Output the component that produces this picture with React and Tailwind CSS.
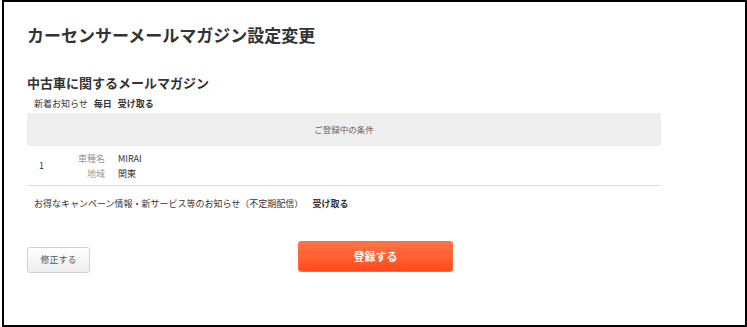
import React from "react";

export default function App() {
  const font = { fontFamily: '"Noto Sans CJK JP", "Noto Sans", sans-serif' };
  return (
    <div className="w-[747px] h-[327px] bg-white pl-[2px]" style={font}>
      <div className="w-[745px] h-[327px] border-2 border-black bg-white pl-[23px] pt-[23px] text-[#333]">
        <h1 className="h-[20px] text-[17px] leading-[20px] font-bold tracking-[0px]">
          カーセンサーメールマガジン設定変更
        </h1>
        <h2 className="mt-[30px] h-[16px] text-[13px] leading-[16px] font-bold">
          中古車に関するメールマガジン
        </h2>
        <div className="mt-[7px] pl-[7px] h-[12px] text-[9px] leading-[12px] flex gap-[6px]">
          <span>新着お知らせ</span>
          <span className="font-bold">毎日</span>
          <span className="font-bold">受け取る</span>
        </div>
        <div className="mt-[3px] w-[634px]">
          <div className="h-[33px] bg-[#eeeeee] flex items-center justify-center text-[8.5px] text-[#666]">
            ご登録中の条件
          </div>
          <div className="h-[40px] flex items-center pl-[12px] border-b border-[#dddddd] text-[9px]">
            <span className="w-[20px]">1</span>
            <div className="grid grid-cols-[46px_auto] gap-x-[13px] leading-[15px]">
              <span className="text-right text-[#999]">車種名</span>
              <span>MIRAI</span>
              <span className="text-right text-[#999]">地域</span>
              <span>関東</span>
            </div>
          </div>
          <div className="mt-[12px] pl-[7px] h-[12px] text-[9px] leading-[12px] flex gap-[9px]">
            <span>お得なキャンペーン情報・新サービス等のお知らせ（不定期配信）</span>
            <span className="font-bold">受け取る</span>
          </div>
          <div className="mt-[31px] flex items-start">
            <button className="mt-[6px] w-[63px] h-[26px] rounded-[3px] border border-[#d0d0d0] bg-gradient-to-b from-[#ffffff] to-[#eeeeee] text-[9px] text-[#555]">
              修正する
            </button>
            <button className="ml-[208px] w-[155px] h-[31px] rounded-[3px] border border-[#ff6a3a] bg-gradient-to-b from-[#ff7444] to-[#ff4a1c] text-[11px] font-bold text-white">
              登録する
            </button>
          </div>
        </div>
      </div>
    </div>
  );
}
